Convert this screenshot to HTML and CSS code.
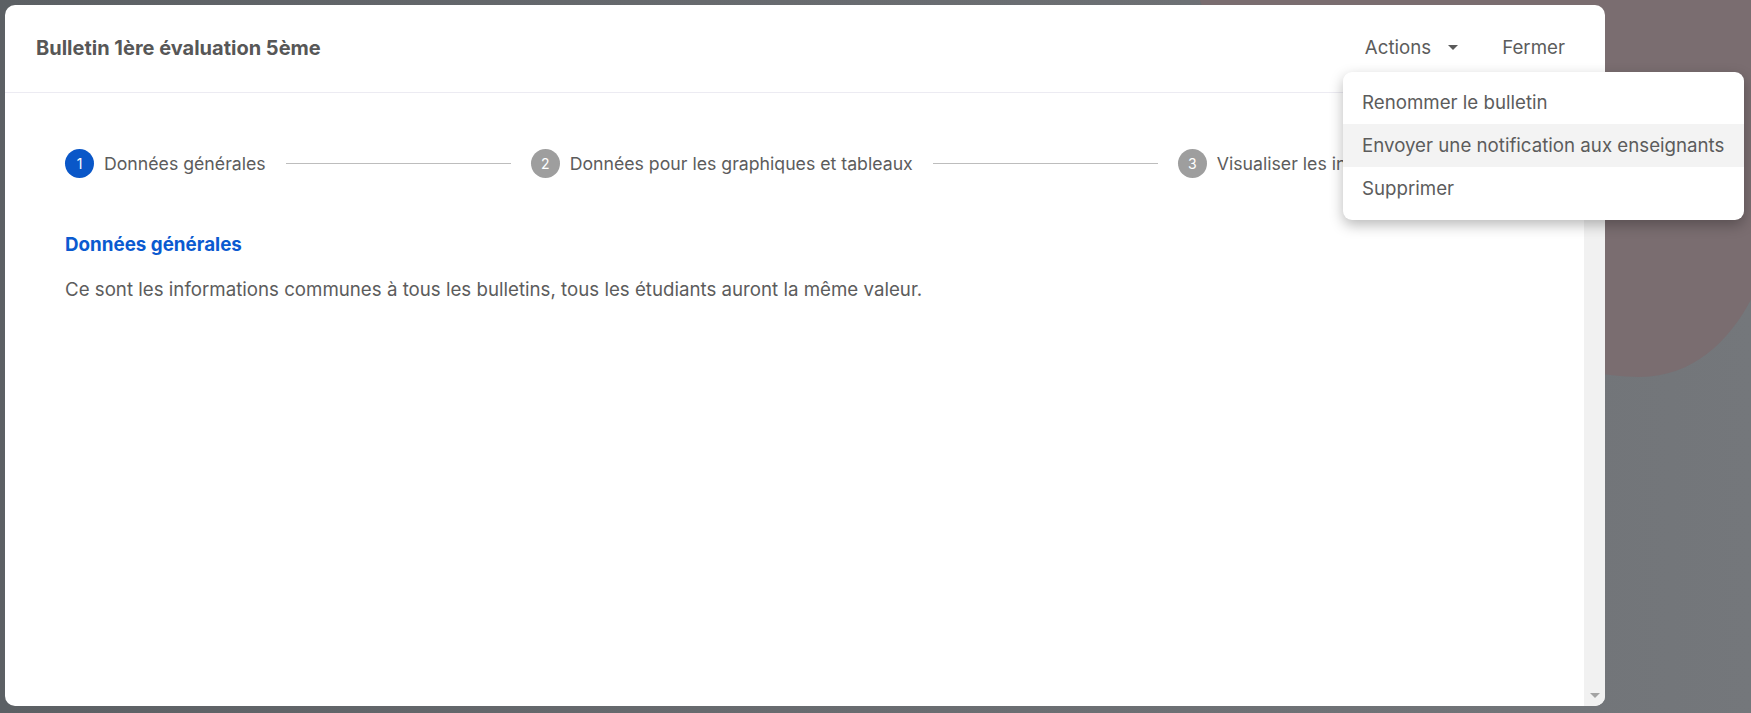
FILE: index.html
```html
<!DOCTYPE html>
<html lang="fr">
<head>
    <meta charset="UTF-8">
    <title>Bulletin 1ère évaluation 5ème</title>
    <link rel="stylesheet" href="styles.css">
</head>
<body>
    <!-- decorative shape of the page behind the overlay -->
    <svg class="backdrop-blob" width="1751" height="713" viewBox="0 0 1751 713">
        <path d="M1200 0 C 1260 200, 1480 377, 1640 377 C 1700 377, 1740 330, 1760 280 L 1760 0 Z" fill="#7a6d70"/>
    </svg>

    <div class="modal">
        <div class="modal-header">
            <h2 class="modal-title">Bulletin 1ère évaluation 5ème</h2>
            <div class="header-actions">
                <button class="header-btn actions-btn">
                    Actions
                    <span class="caret"></span>
                </button>
                <button class="header-btn">Fermer</button>
            </div>
        </div>

        <div class="modal-body">
            <div class="modal-content">
                <div class="stepper">
                    <div class="step active">
                        <span class="step-num">1</span>
                        <span class="step-label">Données générales</span>
                    </div>
                    <div class="step-line"></div>
                    <div class="step">
                        <span class="step-num">2</span>
                        <span class="step-label">Données pour les graphiques et tableaux</span>
                    </div>
                    <div class="step-line"></div>
                    <div class="step">
                        <span class="step-num">3</span>
                        <span class="step-label">Visualiser les informations</span>
                    </div>
                </div>

                <h3 class="section-title">Données générales</h3>
                <p class="section-text">Ce sont les informations communes à tous les bulletins, tous les étudiants auront la même valeur.</p>
            </div>
            <div class="scrollbar">
                <span class="scroll-arrow"></span>
            </div>
        </div>
    </div>

    <ul class="dropdown">
        <li class="dropdown-item">Renommer le bulletin</li>
        <li class="dropdown-item hover">Envoyer une notification aux enseignants</li>
        <li class="dropdown-item">Supprimer</li>
    </ul>
</body>
</html>
```

FILE: styles.css
```css
* {
    margin: 0;
    padding: 0;
    box-sizing: border-box;
}

body {
    width: 1751px;
    height: 713px;
    overflow: hidden;
    padding: 5px 0 0 5px;
    font-family: 'Inter', 'Noto Sans', sans-serif;
    background: linear-gradient(90deg, #5c6064 0%, #676a6e 40%, #74777b 100%);
    position: relative;
}

/* Decorative shape behind the dialog */
.backdrop-blob {
    position: absolute;
    left: 0;
    top: 0;
}

/* Dialog */
.modal {
    position: relative;
    width: 1600px;
    height: 701px;
    background-color: #fff;
    border-radius: 10px;
    overflow: hidden;
    display: flex;
    flex-direction: column;
}

.modal-header {
    height: 88px;
    flex-shrink: 0;
    display: flex;
    align-items: center;
    justify-content: space-between;
    padding: 0 40px 2px 31px;
    border-bottom: 1px solid #ecebf2;
}

.modal-title {
    font-size: 20px;
    font-weight: 700;
    color: #575757;
}

.header-actions {
    display: flex;
    align-items: center;
    gap: 44px;
}

.header-btn {
    border: none;
    background: none;
    font-family: inherit;
    font-size: 18.7px;
    color: #5c5c5c;
    display: flex;
    align-items: center;
    cursor: pointer;
}

.caret {
    margin-left: 17px;
    width: 0;
    height: 0;
    border-left: 5px solid transparent;
    border-right: 5px solid transparent;
    border-top: 5px solid #5a5a5a;
}

/* Body */
.modal-body {
    flex: 1;
    display: flex;
    min-height: 0;
}

.modal-content {
    flex: 1;
    padding: 56px 60px 0 60px;
    overflow: hidden;
}

.scrollbar {
    width: 21px;
    background-color: #f1f1f1;
    display: flex;
    flex-direction: column;
    justify-content: flex-end;
    align-items: center;
    padding-bottom: 8px;
}

.scroll-arrow {
    width: 0;
    height: 0;
    border-left: 5px solid transparent;
    border-right: 5px solid transparent;
    border-top: 5px solid #a3a3a3;
}

/* Stepper */
.stepper {
    display: flex;
    align-items: center;
    white-space: nowrap;
}

.step {
    display: flex;
    align-items: center;
    gap: 10px;
}

.step-num {
    width: 29px;
    height: 29px;
    border-radius: 50%;
    background-color: #9e9e9e;
    color: #fff;
    font-size: 14px;
    display: flex;
    align-items: center;
    justify-content: center;
}

.step.active .step-num {
    background-color: #0a57c8;
}

.step-label {
    font-size: 17.7px;
    color: #5c5c5c;
}

.step-line {
    width: 225px;
    height: 1px;
    background-color: #bdbdbd;
    margin: 0 20px;
    flex-shrink: 0;
}

.section-title {
    margin-top: 55px;
    font-size: 18.8px;
    font-weight: 700;
    color: #0a5ad0;
}

.section-text {
    margin-top: 22px;
    font-size: 18.7px;
    color: #5c5c5c;
}

/* Actions menu */
.dropdown {
    position: absolute;
    left: 1343px;
    top: 72px;
    width: 401px;
    list-style: none;
    background-color: #fff;
    border-radius: 9px;
    padding: 9px 0 10px;
    box-shadow: 0 5px 14px rgba(0, 0, 0, 0.28);
}

.dropdown-item {
    height: 43px;
    display: flex;
    align-items: center;
    padding-left: 19px;
    font-size: 18.7px;
    color: #5c5c5c;
    cursor: pointer;
}

.dropdown-item.hover {
    background-color: #f3f3f3;
}
```
